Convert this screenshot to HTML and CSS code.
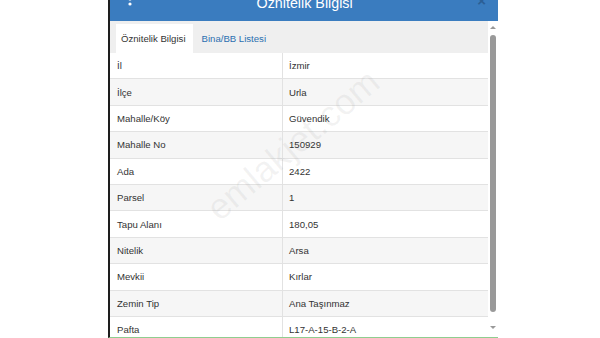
FILE: index.html
```html
<!DOCTYPE html>
<html lang="tr">
<head>
    <meta charset="UTF-8">
    <title>Öznitelik Bilgisi</title>
    <link rel="stylesheet" href="styles.css">
</head>
<body>
    <div class="dialog">
        <div class="dialog-header">
            <svg class="kebab" width="4" height="12" viewBox="0 0 4 12">
                <circle cx="2" cy="-1" r="1.6" fill="#fff"/>
                <circle cx="2" cy="4" r="1.6" fill="#fff"/>
            </svg>
            <div class="title">Öznitelik Bilgisi</div>
            <div class="close">×</div>
        </div>

        <div class="dialog-body">
            <div class="content">
                <div class="tabs">
                    <div class="tab active">Öznitelik Bilgisi</div>
                    <div class="tab">Bina/BB Listesi</div>
                </div>

                <table class="info">
                    <tr><td>İl</td><td>İzmir</td></tr>
                    <tr><td>İlçe</td><td>Urla</td></tr>
                    <tr><td>Mahalle/Köy</td><td>Güvendik</td></tr>
                    <tr><td>Mahalle No</td><td>150929</td></tr>
                    <tr><td>Ada</td><td>2422</td></tr>
                    <tr><td>Parsel</td><td>1</td></tr>
                    <tr><td>Tapu Alanı</td><td>180,05</td></tr>
                    <tr><td>Nitelik</td><td>Arsa</td></tr>
                    <tr><td>Mevkii</td><td>Kırlar</td></tr>
                    <tr><td>Zemin Tip</td><td>Ana Taşınmaz</td></tr>
                    <tr><td>Pafta</td><td>L17-A-15-B-2-A</td></tr>
                </table>
            </div>

            <div class="scrollbar">
                <div class="arrow up"></div>
                <div class="thumb"></div>
                <div class="arrow down"></div>
            </div>
        </div>

        <div class="watermark">emlakjet.com</div>
    </div>
</body>
</html>
```

FILE: styles.css
```css
body {
    margin: 0;
    background: #fff;
    font-family: "Liberation Sans", Arial, sans-serif;
    color: #333;
    overflow: hidden;
}

.dialog {
    position: relative;
    margin-left: 108px;
    width: 388px;
    height: 337px;
    border-left: 2px solid #1e1e1e;
    border-bottom: 1px solid #8fce8f;
    overflow: hidden;
}

.dialog-header {
    display: flex;
    align-items: flex-start;
    height: 21px;
    padding: 0 12px 0 18px;
    background: #3a7cbf;
    overflow: hidden;
}

.kebab {
    display: block;
}

.title {
    flex: 1;
    margin-top: -4px;
    font-size: 14.3px;
    line-height: 14px;
    color: #fff;
    text-align: center;
}

.close {
    margin-top: -6px;
    font-size: 15px;
    line-height: 14px;
    color: #2b5f96;
    font-weight: bold;
}

.dialog-body {
    display: flex;
    height: 316px;
}

.content {
    width: 378px;
}

.tabs {
    display: flex;
    height: 29px;
    padding: 3px 0 0 6px;
    background: #efefef;
}

.tab {
    padding: 0 7px 0 5px;
    font-size: 9.6px;
    line-height: 29px;
    color: #2c6fb0;
}

.tab.active {
    background: #fff;
    color: #333;
}

.tab + .tab {
    padding-left: 9px;
}

.info {
    width: 100%;
    border-collapse: collapse;
    font-size: 9.6px;
}

.info td {
    height: 25.4px;
    padding: 0 6px;
    border-top: 1px solid #e2e2e2;
}

.info td:first-child {
    width: 159px;
    padding-left: 7px;
    border-right: 1px solid #e2e2e2;
}

.info tr:first-child td {
    border-top: none;
}

.info tr:nth-child(even) td {
    background: #f6f6f6;
}

.scrollbar {
    display: flex;
    flex-direction: column;
    align-items: center;
    width: 10px;
    padding-top: 5px;
}

.arrow {
    width: 0;
    height: 0;
    border-left: 3px solid transparent;
    border-right: 3px solid transparent;
}

.arrow.up {
    border-bottom: 3px solid #999;
}

.arrow.down {
    margin-top: 14px;
    border-top: 3px solid #999;
}

.thumb {
    width: 6px;
    height: 277px;
    margin-top: 6px;
    background: #999;
    border-radius: 3px;
}

.watermark {
    position: absolute;
    left: 77px;
    top: 124px;
    font-size: 36px;
    color: rgba(120, 120, 120, 0.09);
    transform: rotate(-40deg);
    pointer-events: none;
}
```
